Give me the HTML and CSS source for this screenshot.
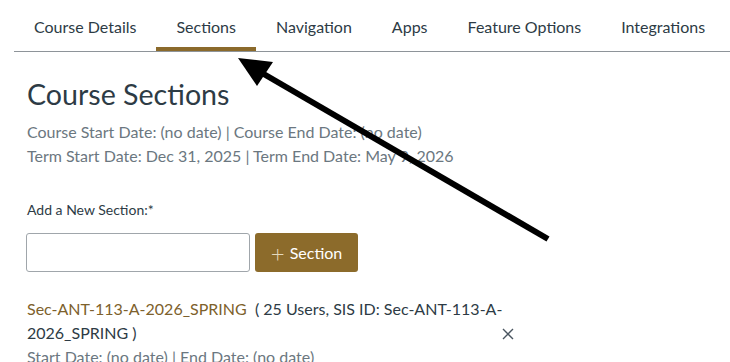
FILE: index.html
```html
<!DOCTYPE html>
<html>
<head>
<meta charset="utf-8">
<link rel="stylesheet" href="styles.css">
</head>
<body>
<nav class="tabs">
  <a class="tab">Course Details</a>
  <a class="tab active">Sections</a>
  <a class="tab">Navigation</a>
  <a class="tab">Apps</a>
  <a class="tab">Feature Options</a>
  <a class="tab">Integrations</a>
</nav>
<main class="content">
  <h1 class="title">Course Sections</h1>
  <div class="dates">
    <div>Course Start Date: (no date) | Course End Date: (no date)</div>
    <div>Term Start Date: Dec 31, 2025 | Term End Date: May 9, 2026</div>
  </div>
  <label class="add-label">Add a New Section:*</label>
  <div class="add-row">
    <input class="add-input" type="text">
    <button class="add-btn"><span class="plus">+</span> Section</button>
  </div>
  <div class="section-item">
    <div class="section-text"><a class="section-link">Sec-ANT-113-A-2026_SPRING</a>&nbsp;&nbsp;( 25 Users, SIS ID: Sec-ANT-113-A-2026_SPRING )</div>
    <div class="section-dates">Start Date: (no date) | End Date: (no date)</div>
    <button class="delete" aria-label="Delete">
      <svg width="12" height="12" viewBox="0 0 12 12"><path d="M1 1 L11 11 M11 1 L1 11" stroke="#4a5560" stroke-width="1.4" fill="none"/></svg>
    </button>
  </div>
</main>
<svg class="arrow" width="730" height="362" viewBox="0 0 730 362">
  <line x1="548" y1="239" x2="262" y2="73" stroke="#000" stroke-width="6"/>
  <polygon points="238,58 273,62 257,86" fill="#000"/>
</svg>
</body>
</html>
```
FILE: styles.css
```css
html, body {
  margin: 0;
  padding: 0;
  background: #fff;
}
body {
  font-family: Lato, "Noto Sans", sans-serif;
  color: #2d3b45;
  width: 730px;
  height: 362px;
  overflow: hidden;
  position: relative;
}
.tabs {
  display: flex;
  margin-left: 14px;
  border-bottom: 1px solid #8e9499;
}
.tab {
  display: block;
  padding: 17px 20px 14px;
  font-size: 16px;
  line-height: 20px;
  color: #2d3b45;
}
.tab.active {
  box-shadow: inset 0 -4px 0 #8b6a2b;
}
.content {
  padding: 0 27px;
}
.title {
  margin: 24px 0 0;
  font-size: 28.6px;
  font-weight: 400;
  line-height: 36px;
  color: #2d3b45;
}
.dates {
  margin-top: 8px;
  font-size: 16px;
  line-height: 24px;
  color: #6b7780;
}
.add-label {
  display: block;
  margin-top: 33px;
  font-size: 14px;
  line-height: 18px;
}
.add-row {
  display: flex;
  gap: 5px;
  margin-top: 14px;
  margin-left: -1px;
}
.add-input {
  box-sizing: border-box;
  width: 224px;
  height: 39px;
  margin: 0;
  border: 1px solid #a0a6ab;
  border-radius: 3px;
}
.add-btn {
  box-sizing: border-box;
  width: 103px;
  height: 39px;
  margin: 0;
  border: none;
  border-radius: 3px;
  background: #8c6b2b;
  color: #fff;
  font-family: Lato, "Noto Sans", sans-serif;
  font-size: 16px;
  display: flex;
  align-items: center;
  justify-content: center;
  gap: 5px;
}
.plus {
  color: #e4d9bd;
  font-size: 24px;
  font-weight: 300;
  line-height: 20px;
}
.section-item {
  position: relative;
  width: 495px;
  margin-top: 25px;
  font-size: 16px;
  line-height: 24px;
}
.section-link {
  color: #7d612c;
}
.section-dates {
  color: #6b7780;
  font-size: 16px;
}
.delete {
  position: absolute;
  left: 475px;
  top: 31px;
  padding: 0;
  border: none;
  background: none;
  display: flex;
}
.arrow {
  position: absolute;
  left: 0;
  top: 0;
  pointer-events: none;
}
```
